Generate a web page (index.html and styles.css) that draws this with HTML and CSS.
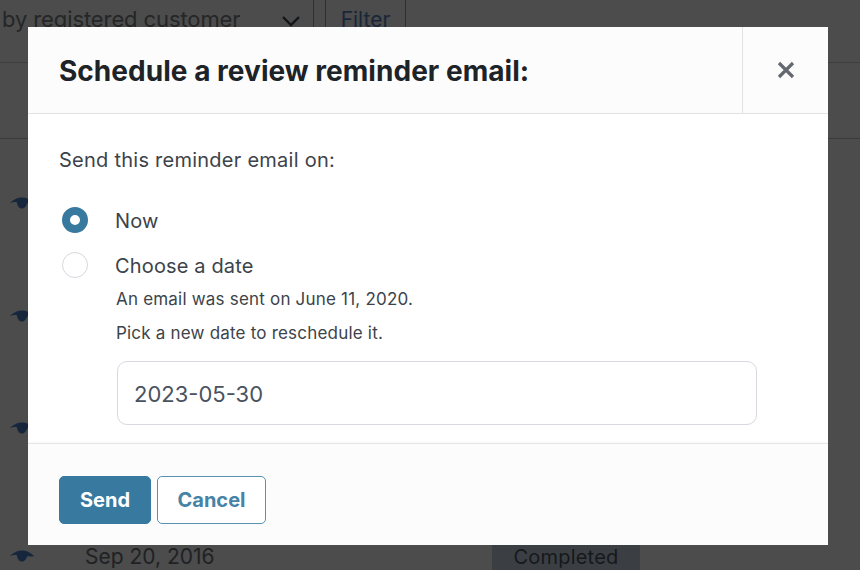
FILE: index.html
```html
<!DOCTYPE html>
<html lang="en">
<head>
    <meta charset="UTF-8">
    <meta name="viewport" content="width=device-width, initial-scale=1.0">
    <title>Schedule a review reminder email</title>
    <link rel="stylesheet" href="styles.css">
</head>
<body>
    <div class="page">
        <div class="toolbar">
            <span class="customer-select">by registered customer</span>
            <svg class="chevron" width="20" height="12" viewBox="0 0 20 12"><path d="M2 2l8 8 8-8" fill="none" stroke="#141619" stroke-width="2.4"/></svg>
            <span class="divider"></span>
            <span class="filter-btn">Filter</span>
        </div>
        <div class="table-head"></div>
        <div class="row">
            <svg class="eye" width="24" height="12" viewBox="0 0 24 12"><path d="M0 6C4 2 8 .5 12 .5S20 2 24 6c-3 1-5 .4-6.5 0C16 10 14 11.500 12 11.500S7.500 10 6.800 5C4.500 4.600 2 5.300 0 6z" fill="#16263d"/></svg>
        </div>
        <div class="row">
            <svg class="eye" width="24" height="12" viewBox="0 0 24 12"><path d="M0 6C4 2 8 .5 12 .5S20 2 24 6c-3 1-5 .4-6.5 0C16 10 14 11.500 12 11.500S7.500 10 6.800 5C4.500 4.600 2 5.300 0 6z" fill="#16263d"/></svg>
        </div>
        <div class="row row-third">
            <svg class="eye" width="24" height="12" viewBox="0 0 24 12"><path d="M0 6C4 2 8 .5 12 .5S20 2 24 6c-3 1-5 .4-6.5 0C16 10 14 11.500 12 11.500S7.500 10 6.800 5C4.500 4.600 2 5.300 0 6z" fill="#16263d"/></svg>
        </div>
        <div class="row row-last">
            <svg class="eye" width="24" height="12" viewBox="0 0 24 12"><path d="M0 6C4 2 8 .5 12 .5S20 2 24 6c-3 1-5 .4-6.5 0C16 10 14 11.500 12 11.500S7.500 10 6.800 5C4.500 4.600 2 5.300 0 6z" fill="#16263d"/></svg>
            <span class="row-date">Sep 20, 2016</span>
            <span class="badge">Completed</span>
        </div>

        <div class="modal">
            <div class="modal-header">
                <h1 class="modal-title">Schedule a review reminder email:</h1>
                <div class="modal-close">
                    <svg width="18" height="18" viewBox="0 0 18 18"><path d="M2 2l14 14M16 2L2 16" fill="none" stroke="#646970" stroke-width="3.200"/></svg>
                </div>
            </div>
            <div class="modal-body">
                <p class="intro">Send this reminder email on:</p>
                <div class="option">
                    <span class="radio radio-checked"></span>
                    <span class="option-label">Now</span>
                </div>
                <div class="option option-date">
                    <span class="radio"></span>
                    <span class="option-label">Choose a date</span>
                </div>
                <div class="date-details">
                    <p class="note">An email was sent on June 11, 2020.</p>
                    <p class="note">Pick a new date to reschedule it.</p>
                    <div class="date-input">2023-05-30</div>
                </div>
            </div>
            <div class="modal-footer">
                <button class="btn btn-primary">Send</button>
                <button class="btn btn-secondary">Cancel</button>
            </div>
        </div>
    </div>
</body>
</html>
```

FILE: styles.css
```css
* {
    box-sizing: border-box;
}
body {
    margin: 0;
    font-family: Inter, "Liberation Sans", sans-serif;
}
.page {
    position: relative;
    width: 860px;
    height: 570px;
    overflow: hidden;
    background-color: #4b4c4b;
}
.toolbar {
    display: flex;
    align-items: flex-start;
    height: 63px;
    border-bottom: 1px solid #3d3e3e;
    color: #252628;
}
.customer-select {
    margin: 7px 0 0 2px;
    width: 279px;
    font-size: 22px;
    line-height: 24px;
    letter-spacing: -0.1px;
    white-space: nowrap;
}
.chevron {
    margin-top: 15px;
}
.divider {
    width: 1px;
    height: 27px;
    margin-left: 12px;
    background-color: #2f3031;
}
.filter-btn {
    width: 81px;
    height: 27px;
    margin-left: 11px;
    padding-top: 8px;
    border-left: 1px solid #2f3031;
    border-right: 1px solid #2f3031;
    color: #1a2638;
    font-size: 21px;
    line-height: 24px;
    text-align: center;
}
.table-head {
    height: 76px;
    border-bottom: 1px solid #393a3a;
}
.row {
    display: flex;
    height: 113px;
    padding: 58px 0 0 10px;
}
.row-third {
    padding-top: 57px;
}
.row-last {
    height: 92px;
    padding-top: 72px;
}
.row-date {
    margin: -5px 0 0 51px;
    color: #202124;
    font-size: 21px;
    line-height: 24px;
}
.badge {
    width: 148px;
    height: 40px;
    margin: -17px 220px 0 auto;
    padding-top: 12px;
    background-color: #3b3f43;
    color: #16181b;
    font-size: 20px;
    line-height: 24px;
    letter-spacing: 0.2px;
    text-align: center;
}
.modal {
    position: absolute;
    top: 27px;
    left: 28px;
    display: flex;
    flex-direction: column;
    width: 800px;
    height: 518px;
    background-color: #fff;
}
.modal-header {
    display: flex;
    justify-content: space-between;
    height: 87px;
    border-bottom: 1px solid #e2e2e2;
    background-color: #fcfcfc;
}
.modal-title {
    margin: 25px 0 0 31px;
    color: #1d2327;
    font-size: 28px;
    font-weight: 700;
    line-height: 38px;
    letter-spacing: 0.03px;
}
.modal-close {
    display: flex;
    align-items: center;
    justify-content: center;
    width: 86px;
    border-left: 1px solid #e2e2e2;
}
.modal-body {
    flex: 1;
    padding: 0 0 0 31px;
}
.intro {
    margin: 34px 0 0;
    color: #3c434a;
    font-size: 20px;
    line-height: 24px;
    letter-spacing: 0.25px;
}
.option {
    display: flex;
    align-items: center;
    height: 26px;
    margin-top: 35px;
    padding-left: 3px;
    color: #3c434a;
    font-size: 20px;
    letter-spacing: 0.15px;
}
.option-date {
    margin-top: 19px;
}
.option-label {
    margin-top: 1px;
}
.radio {
    width: 26px;
    height: 26px;
    margin-right: 27px;
    border: 1px solid #d5d8dc;
    border-radius: 50%;
    background-color: #fff;
}
.radio-checked {
    border: 8px solid #387a9f;
}
.date-details {
    padding-left: 57px;
}
.note {
    margin: 0;
    height: 34px;
    color: #3c434a;
    font-size: 17px;
    line-height: 34px;
    letter-spacing: 0.2px;
}
.note:first-child {
    margin-top: 4px;
}
.date-input {
    width: 640px;
    height: 64px;
    margin: 11px 0 0 1px;
    padding: 0 16px;
    border: 1px solid #d6d9e0;
    border-radius: 10px;
    color: #4a5260;
    font-size: 22px;
    line-height: 64px;
}
.modal-footer {
    display: flex;
    gap: 6px;
    height: 102px;
    padding: 32px 0 0 31px;
    border-top: 1px solid #e6e6e6;
    background-color: #fcfcfc;
    box-shadow: 0 -1px 2px rgba(0, 0, 0, 0.03);
}
.btn {
    height: 48px;
    border-radius: 5px;
    font-family: inherit;
    font-size: 20px;
    font-weight: 700;
}
.btn-primary {
    width: 92px;
    border: 1px solid #387a9f;
    background-color: #387a9f;
    color: #fff;
}
.btn-secondary {
    width: 109px;
    border: 1px solid #5a91b0;
    background-color: #fff;
    color: #4683a5;
}
```
